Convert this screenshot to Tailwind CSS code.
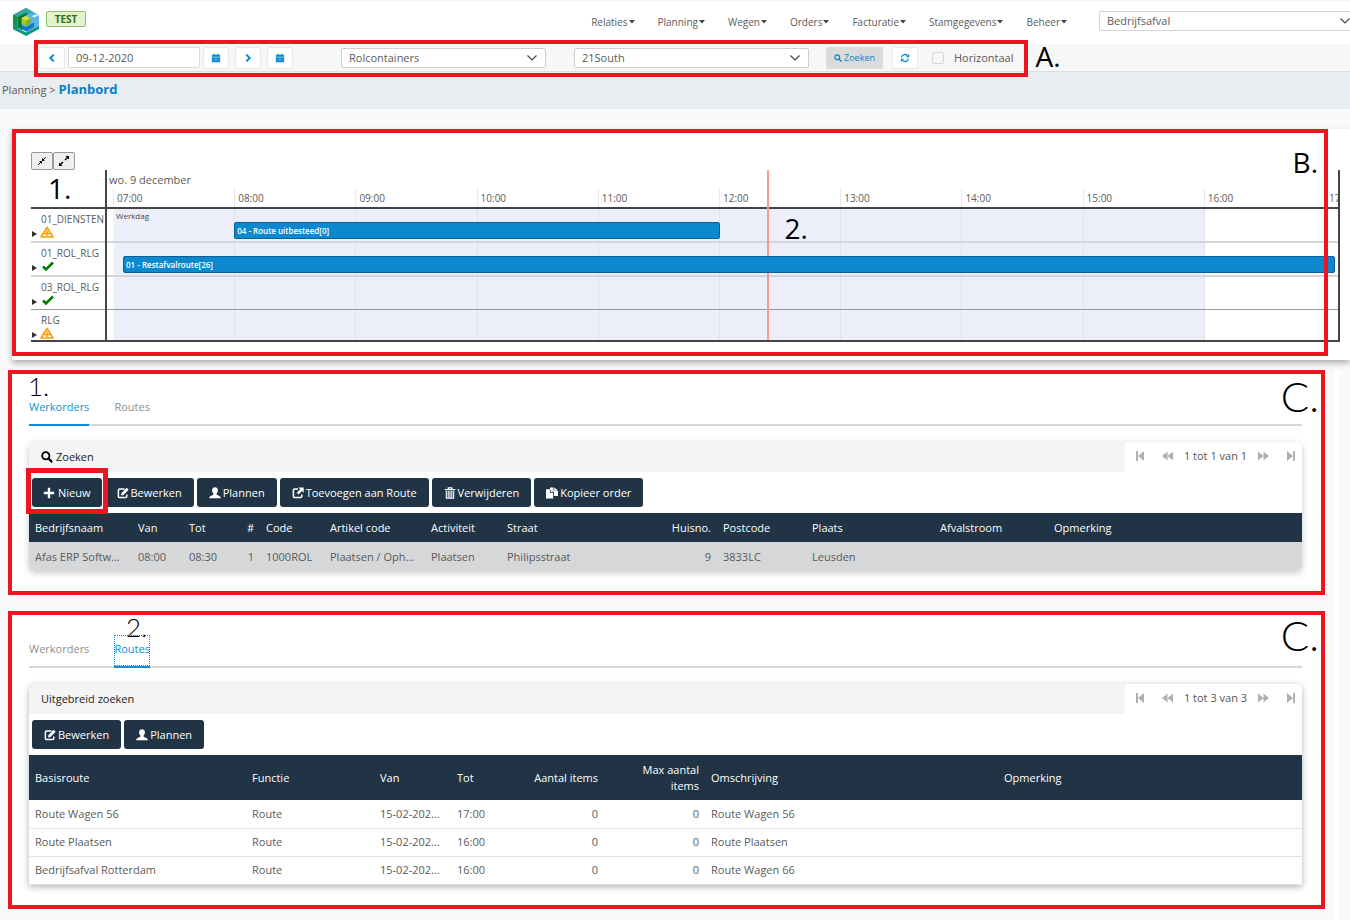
<!DOCTYPE html>
<html lang="nl">
<head>
<meta charset="utf-8">
<title>Planbord</title>
<script src="https://cdn.jsdelivr.net/npm/@tailwindcss/browser@4"></script>
</head>
<body class="min-h-screen bg-[#f8f9fb] font-['Open_Sans','Noto_Sans',sans-serif] text-[11px] leading-4 text-[#5a5a5a] overflow-x-hidden">

<svg class="hidden" aria-hidden="true">
  <symbol id="i-down" viewBox="0 0 12 12"><path d="M1.500 3.500 6 8l4.500-4.500" fill="none" stroke="currentColor" stroke-width="1.200"/></symbol>
  <symbol id="i-left" viewBox="0 0 12 12"><path d="M8 2 4 6l4 4" fill="none" stroke="currentColor" stroke-width="2.400"/></symbol>
  <symbol id="i-right" viewBox="0 0 12 12"><path d="m4 2 4 4-4 4" fill="none" stroke="currentColor" stroke-width="2.400"/></symbol>
  <symbol id="i-cal" viewBox="0 0 12 12"><path d="M1 2h2V1h1.500v1h3V1H9v1h2v2.500H1zM1 5.200h10V11H1z" fill="currentColor"/><path d="M3 7h6M3 9h6" stroke="#fff" stroke-width=".5" stroke-dasharray="1 .7"/></symbol>
  <symbol id="i-search" viewBox="0 0 12 12"><circle cx="4.800" cy="4.800" r="3.600" fill="none" stroke="currentColor" stroke-width="1.800"/><path d="m7.500 7.500 3.600 3.600" stroke="currentColor" stroke-width="2.200"/></symbol>
  <symbol id="i-refresh" viewBox="0 0 12 12"><path d="M1.800 5.400A4.200 4.200 0 0 1 9 3.200M10.200 6.600A4.200 4.200 0 0 1 3 8.800" fill="none" stroke="currentColor" stroke-width="1.600"/><path d="M11 1v4H7zM1 11V7h4z" fill="currentColor"/></symbol>
  <symbol id="i-plus" viewBox="0 0 12 12"><path d="M6 .8v10.400M.8 6h10.400" stroke="currentColor" stroke-width="2.400"/></symbol>
  <symbol id="i-edit" viewBox="0 0 12 12"><path d="M7.500 1.900H2.700a1.300 1.300 0 0 0-1.300 1.300v6.100a1.300 1.300 0 0 0 1.300 1.300h5.800a1.300 1.300 0 0 0 1.300-1.300V7.500" fill="none" stroke="currentColor" stroke-width="1.500"/><path d="M4 8.600 4.500 6 9.700.8l2 2L6.500 8z" fill="currentColor"/></symbol>
  <symbol id="i-share" viewBox="0 0 12 12"><path d="M6 1.900H2.700a1.300 1.300 0 0 0-1.300 1.300v6.100a1.300 1.300 0 0 0 1.300 1.300h5.800a1.300 1.300 0 0 0 1.300-1.300V7.500" fill="none" stroke="currentColor" stroke-width="1.500"/><path d="M6.500.5h5.200v5.200L10 4 6.500 7.500l-1.800-1.800L8.200 2.200z" fill="currentColor"/></symbol>
  <symbol id="i-user" viewBox="0 0 12 12"><path d="M6 .3c1.700 0 2.900 1.100 2.900 2.900 0 1.500-.6 2.600-1.300 3.300v1.300c1.600.6 4 1.400 4.300 3.400H.1c.3-2 2.700-2.800 4.300-3.400V6.500C3.700 5.800 3.100 4.700 3.100 3.200 3.100 1.400 4.300.3 6 .3z" fill="currentColor"/></symbol>
  <symbol id="i-trash" viewBox="0 0 12 12"><path d="M4.300 2V.8h3.400V2M.8 2.600h10.400" fill="none" stroke="currentColor" stroke-width="1.300"/><path d="M2.300 4v7.200h7.400V4M4.200 4v7M6 4v7M7.800 4v7" fill="none" stroke="currentColor" stroke-width="1.100"/></symbol>
  <symbol id="i-copy" viewBox="0 0 12 12"><path d="M4 .5h3.500v2.700H11L12 4v5H8V5L5.500 3H4zM8.300.5 11.500 3H8.300zM0 2.200h4v3.600h3.200v5.700H0zM4.800 2.500 7.200 5H4.800z" fill="currentColor"/></symbol>
  <symbol id="i-first" viewBox="0 0 12 12"><path d="M2 1h2v10H2zM10 1v10L4 6z" fill="currentColor"/></symbol>
  <symbol id="i-last" viewBox="0 0 12 12"><path d="M8 1h2v10H8zM2 1v10l6-5z" fill="currentColor"/></symbol>
  <symbol id="i-back" viewBox="0 0 12 12"><path d="M6 1v10L0 6zM12 1v10L6 6z" fill="currentColor"/></symbol>
  <symbol id="i-fwd" viewBox="0 0 12 12"><path d="M0 1v10l6-5zM6 1v10l6-5z" fill="currentColor"/></symbol>
  <symbol id="i-warn" viewBox="0 0 14 12"><path d="M7 1.300 13 11H1z" fill="none" stroke="#f90" stroke-width="1.600" stroke-linejoin="round"/><path d="M7 4v6M4 7.500h6" stroke="#f90" stroke-width="1.300"/></symbol>
  <symbol id="i-check" viewBox="0 0 12 12"><path d="m1 6.500 3 3 7-7" fill="none" stroke="#008000" stroke-width="2.600"/></symbol>
  <symbol id="i-in" viewBox="0 0 12 12"><path d="m1.500 10.500 9-9" stroke="currentColor" stroke-width="1.200"/><path d="M2.500 6H6v3.500zM6 2.500V6h3.500z" fill="currentColor"/></symbol>
  <symbol id="i-out" viewBox="0 0 12 12"><path d="m2 10 3-3M7 5l3-3" stroke="currentColor" stroke-width="1.400"/><path d="M1 7.500V11h3.500zM7.500 1H11v3.500z" fill="currentColor"/></symbol>
</svg>

<header class="flex h-11 items-start border-t border-[#f5f5f5] bg-white">
  <a href="#" aria-label="Home" class="ml-3 mt-1.5">
    <svg class="h-[30px] w-7" viewBox="0 0 28 30">
      <path d="M14 1 1 8v14l4.500 2.500V10L14 5.500z" fill="#12913f"/>
      <path d="M14 1v4.500l3.500 1.800L13 9.800v3L23 7.500 27 8z" fill="#4ab0e2"/>
      <path d="M14 1 1 8l4.500 2L14 5.500l3 1.500 4-2.200z" fill="#35a6a0"/>
      <path d="m27 8-5 2.500v6.200L14 21v5l13-7z" fill="#5bb5ea"/>
      <path d="M1 22l13 7 13-7v-3l-13 6.500L5.500 21v-3L1 17z" fill="#0b9a83"/>
      <path d="M5.500 10 14 5.500 17 7l-7 4v12l-4.500-2.500z" fill="#0a7a38"/>
      <path d="m17.500 7.300 4.500 3.200v6.200L14 21l-4-3V11z" fill="#5bb5ea"/>
      <path d="m10 18 4 2 8-4.500V20l-8 4.500-4-2z" fill="#1479c9"/>
      <path d="m14 9 4.500 2.300L14 13.700l-4.500-2.400z" fill="#e3e21c"/>
      <path d="M9.500 11.300 14 13.700V19l-4.500-2.500z" fill="#a8c81a"/>
      <path d="m18.500 11.300-4.500 2.400V19l4.500-2.500z" fill="#7fb51c"/>
    </svg>
  </a>
  <span class="ml-1.5 mt-2.5 flex h-4 w-10 items-center justify-center rounded-xs border border-[#8fc162] bg-[#e2f3cd] text-[10px] font-bold text-[#33700a]">TEST</span>
  <nav class="ml-auto mt-[13px] flex gap-[23px] text-[10px]">
    <a href="#" class="flex items-center gap-px">Relaties<svg class="h-1 w-1.5" viewBox="0 0 6 4"><path d="M0 0h6L3 3.500z" fill="#444"/></svg></a>
    <a href="#" class="flex items-center gap-px">Planning<svg class="h-1 w-1.5" viewBox="0 0 6 4"><path d="M0 0h6L3 3.500z" fill="#444"/></svg></a>
    <a href="#" class="flex items-center gap-px">Wegen<svg class="h-1 w-1.5" viewBox="0 0 6 4"><path d="M0 0h6L3 3.500z" fill="#444"/></svg></a>
    <a href="#" class="flex items-center gap-px">Orders<svg class="h-1 w-1.5" viewBox="0 0 6 4"><path d="M0 0h6L3 3.500z" fill="#444"/></svg></a>
    <a href="#" class="flex items-center gap-px">Facturatie<svg class="h-1 w-1.5" viewBox="0 0 6 4"><path d="M0 0h6L3 3.500z" fill="#444"/></svg></a>
    <a href="#" class="flex items-center gap-px">Stamgegevens<svg class="h-1 w-1.5" viewBox="0 0 6 4"><path d="M0 0h6L3 3.500z" fill="#444"/></svg></a>
    <a href="#" class="flex items-center gap-px">Beheer<svg class="h-1 w-1.5" viewBox="0 0 6 4"><path d="M0 0h6L3 3.500z" fill="#444"/></svg></a>
  </nav>
  <div class="relative ml-8 mt-2.5 w-[251px]">
    <select aria-label="Afdeling" class="block h-5 w-full appearance-none rounded-l-xs border border-r-0 border-[#d4d4d4] bg-white px-[7px]"><option>Bedrijfsafval</option></select>
    <svg class="pointer-events-none absolute -right-px top-1 size-3 text-[#444]"><use href="#i-down"/></svg>
  </div>
</header>

<div class="flex h-7 items-center border-b border-[#dcdfe0] bg-[#f7f7f7] pl-[34px]">
  <form class="relative flex h-full items-center pl-[5px] pr-[15px]" onsubmit="return false">
    <button type="button" aria-label="Vorige dag" class="flex h-[22px] w-[26px] items-center justify-center rounded-xs border border-[#e9e9e9] bg-white text-[#0b86d0]"><svg class="size-2.5"><use href="#i-left"/></svg></button>
    <input type="text" aria-label="Datum" value="09-12-2020" class="ml-[3px] h-[21px] w-[132px] rounded-xs border border-[#dadada] bg-white px-[7px]">
    <button type="button" aria-label="Kalender" class="ml-[3px] flex h-[22px] w-[26px] items-center justify-center rounded-xs border border-[#e9e9e9] bg-white text-[#0b86d0]"><svg class="size-2.5"><use href="#i-cal"/></svg></button>
    <button type="button" aria-label="Volgende dag" class="ml-1.5 flex h-[22px] w-[26px] items-center justify-center rounded-xs border border-[#e9e9e9] bg-white text-[#0b86d0]"><svg class="size-2.5"><use href="#i-right"/></svg></button>
    <button type="button" aria-label="Vandaag" class="ml-1.5 flex h-[22px] w-[26px] items-center justify-center rounded-xs border border-[#e9e9e9] bg-white text-[#0b86d0]"><svg class="size-2.5"><use href="#i-cal"/></svg></button>
    <div class="relative ml-12 w-[205px]">
      <select aria-label="Groep" class="block h-5 w-full appearance-none rounded-xs border border-[#cfcfcf] bg-white px-[7px]"><option>Rolcontainers</option></select>
      <svg class="pointer-events-none absolute right-2 top-1 size-3 text-[#444]"><use href="#i-down"/></svg>
    </div>
    <div class="relative ml-7 w-[235px]">
      <select aria-label="Locatie" class="block h-5 w-full appearance-none rounded-xs border border-[#cfcfcf] bg-white px-[7px]"><option>21South</option></select>
      <svg class="pointer-events-none absolute right-2 top-1 size-3 text-[#444]"><use href="#i-down"/></svg>
    </div>
    <button type="submit" class="ml-[17px] flex h-[22px] w-[57px] items-center justify-center gap-0.5 rounded-xs bg-[#dbdbdb] text-[9px] text-[#0b86d0]"><svg class="size-2"><use href="#i-search"/></svg>Zoeken</button>
    <button type="button" aria-label="Vernieuwen" class="ml-[9px] flex h-[22px] w-[26px] items-center justify-center rounded-xs border border-[#e9e9e9] bg-white text-[#0b86d0]"><svg class="size-2.5"><use href="#i-refresh"/></svg></button>
    <label class="ml-3.5 flex items-center gap-2.5"><input type="checkbox" class="size-3 appearance-none rounded-xs border border-[#d8d8d8] bg-[#f7f7f7]">Horizontaal</label>
    <div class="pointer-events-none absolute -bottom-1.5 -top-1 inset-x-0 border-4 border-[#ee1520]"></div>
  </form>
  <span class="ml-[7px] pb-1 text-[28px] leading-7 text-black">A.</span>
</div>

<div class="h-[37px] bg-[#e9edf0] pl-0.5 pt-[9px]">
  <a href="#">Planning</a> &gt; <a href="#" class="text-[13px] font-bold text-[#0b7fcb]">Planbord</a>
</div>

<main>
  <section class="relative ml-3 mt-5 bg-white pb-[18px] pl-[19px] pr-2.5 pt-[23px] shadow-[0_3px_6px_rgba(0,0,0,0.3)]">
    <div class="flex h-[18px]">
      <button aria-label="Inklappen" class="flex w-[22px] items-center justify-center rounded-xs border border-[#999] bg-[#efefef] text-black"><svg class="size-2.5"><use href="#i-in"/></svg></button>
      <button aria-label="Uitklappen" class="flex w-[22px] items-center justify-center rounded-xs border border-[#999] bg-[#efefef] text-black"><svg class="size-3"><use href="#i-out"/></svg></button>
    </div>
    <div class="flex border-b-2 border-[#444]">
      <div class="w-[74px] shrink-0 text-[10px]">
        <div class="h-[39px] border-b-2 border-[#444] pl-[17px] text-[28px] leading-9 text-black">1.</div>
        <div class="h-[34px] border-b-2 border-[#d6d6d6] pt-1">
          <div class="pl-2.5 leading-3 whitespace-nowrap">01_DIENSTEN</div>
          <div class="flex h-3.5 items-center gap-[3px] pl-px"><button aria-label="Open" class="pt-1"><svg class="h-1.5 w-[5px]" viewBox="0 0 5 6"><path d="M0 0v6l5-3z" fill="#333"/></svg></button><svg class="h-3 w-3.5"><use href="#i-warn"/></svg></div>
        </div>
        <div class="h-[34px] border-b-2 border-[#d6d6d6] pt-1">
          <div class="pl-2.5 leading-3">01_ROL_RLG</div>
          <div class="flex h-3.5 items-center gap-[5px] pl-px"><button aria-label="Open" class="pt-1"><svg class="h-1.5 w-[5px]" viewBox="0 0 5 6"><path d="M0 0v6l5-3z" fill="#333"/></svg></button><svg class="size-3"><use href="#i-check"/></svg></div>
        </div>
        <div class="h-[33px] border-b border-[#999] pt-1">
          <div class="pl-2.5 leading-3">03_ROL_RLG</div>
          <div class="flex h-3.5 items-center gap-[5px] pl-px"><button aria-label="Open" class="pt-1"><svg class="h-1.5 w-[5px]" viewBox="0 0 5 6"><path d="M0 0v6l5-3z" fill="#333"/></svg></button><svg class="size-3"><use href="#i-check"/></svg></div>
        </div>
        <div class="h-[30px] pt-1">
          <div class="pl-2.5 leading-3">RLG</div>
          <div class="flex h-3.5 items-center gap-[3px] pl-px"><button aria-label="Open" class="pt-1"><svg class="h-1.5 w-[5px]" viewBox="0 0 5 6"><path d="M0 0v6l5-3z" fill="#333"/></svg></button><svg class="h-3 w-3.5"><use href="#i-warn"/></svg></div>
        </div>
      </div>
      <div class="relative min-w-0 flex-1 overflow-hidden border-l-2 border-r-2 border-[#444]">
        <div class="flex h-[39px] flex-col justify-between border-b-2 border-[#444]">
          <div class="pl-0.5 pt-0.5">wo. 9 december</div>
          <div class="grid grid-cols-[6px_repeat(10,minmax(0,1fr))_13px] text-[10px] leading-[18px]">
            <span></span>
            <span class="border-l border-[#e8e8e8] pl-[3px]">07:00</span>
            <span class="border-l border-[#e8e8e8] pl-[3px]">08:00</span>
            <span class="border-l border-[#e8e8e8] pl-[3px]">09:00</span>
            <span class="border-l border-[#e8e8e8] pl-[3px]">10:00</span>
            <span class="border-l border-[#e8e8e8] pl-[3px]">11:00</span>
            <span class="border-l border-[#e8e8e8] pl-[3px]">12:00</span>
            <span class="border-l border-[#e8e8e8] pl-[3px]">13:00</span>
            <span class="border-l border-[#e8e8e8] pl-[3px]">14:00</span>
            <span class="border-l border-[#e8e8e8] pl-[3px]">15:00</span>
            <span class="border-l border-[#e8e8e8] pl-[3px]">16:00</span>
            <span class="border-l border-[#e8e8e8] pl-[3px]">17:00</span>
          </div>
        </div>
        <div class="relative">
          <!-- working hours shading -->
          <div class="absolute inset-0 grid grid-cols-[6px_repeat(10,minmax(0,1fr))_13px]">
            <span></span>
            <span class="border-l-2 border-[#f4f4f8] bg-[#eceffa]"></span>
            <span class="border-l border-[#dfe2ee] bg-[#eceffa]"></span>
            <span class="border-l border-[#dfe2ee] bg-[#eceffa]"></span>
            <span class="border-l border-[#dfe2ee] bg-[#eceffa]"></span>
            <span class="border-l border-[#dfe2ee] bg-[#eceffa]"></span>
            <span class="border-l border-[#dfe2ee] bg-[#eceffa]"></span>
            <span class="border-l border-[#dfe2ee] bg-[#eceffa]"></span>
            <span class="border-l border-[#dfe2ee] bg-[#eceffa]"></span>
            <span class="border-l border-[#dfe2ee] bg-[#eceffa]"></span>
            <span class="border-l border-[#dfe2ee]"></span>
            <span></span>
          </div>
          <div class="relative h-[34px] border-b-2 border-[#d3d5d9] pl-[9px] text-[8px] leading-[14px] text-[#444]">Werkdag</div>
          <div class="relative h-[34px] border-b-2 border-[#d3d5d9]"></div>
          <div class="relative h-[33px] border-b border-[#999]"></div>
          <div class="relative h-[30px]"></div>
        </div>
        <!-- current time and planned routes, placed by time of day -->
        <div class="absolute inset-y-0 left-1.5 right-[13px]">
          <div class="absolute inset-y-0 w-0.5 bg-[#f79a90]" style="left:54%"></div>
          <div class="absolute top-[52px] h-[17px] truncate rounded-xs border border-[#0a5f96] bg-[#0c88cf] pl-0.5 text-[8px] font-semibold leading-4 text-white" style="left:10%;width:40.100%">04 - Route uitbesteed[0]</div>
          <div class="absolute top-[86px] h-[17px] truncate rounded-xs border border-[#0a5f96] bg-[#0c88cf] pl-0.5 text-[8px] font-semibold leading-4 text-white" style="left:.83%;width:100%">01 - Restafvalroute[26]</div>
          <span class="absolute top-11 text-[28px] leading-7 text-black" style="left:55.400%">2.</span>
        </div>
      </div>
    </div>
    <div class="pointer-events-none absolute bottom-1 left-0 right-[22px] top-0 border-4 border-[#ee1520]"></div>
    <span class="absolute right-8 top-[19px] text-[28px] leading-7 text-black">B.</span>
  </section>

  <div class="flex pl-2 pt-2.5">
    <div class="flex min-w-0 flex-1 flex-col gap-4 pb-3">
      <section class="relative border-4 border-[#ee1520] bg-white pb-5 pl-[17px] pr-[19px] pt-[25px]">
        <span class="absolute left-4 top-0 font-[Lato] text-[26px] font-light leading-6 text-black">1.</span>
        <span class="absolute right-0.5 top-0.5 font-[Lato] text-[42px] font-light leading-10 text-black">C.</span>
        <div role="tablist" class="flex gap-[25px] border-b-2 border-[#d8d8d8] text-[#8e8e8e]">
          <button role="tab" aria-selected="true" class="-mb-0.5 h-[27px] border-b-2 border-[#0b8fdc] pb-[9px] text-[#0b8fdc]">Werkorders</button>
          <button role="tab" aria-selected="false" class="-mb-0.5 h-[27px] border-b-2 border-transparent pb-[9px]">Routes</button>
        </div>
        <div class="mt-4 overflow-hidden rounded-md shadow-[0_2px_7px_rgba(0,0,0,0.22)]">
          <div class="flex h-[30px]">
            <button class="flex flex-1 items-center gap-[3px] bg-[#f4f4f4] pl-3 text-[#222]"><svg class="size-3 text-black"><use href="#i-search"/></svg>Zoeken</button>
            <div class="flex w-[177px] items-center justify-between pb-0.5 pl-[9px] pr-[5px] text-[#555]">
              <button aria-label="Eerste" class="text-[#b0b0b0]"><svg class="size-3"><use href="#i-first"/></svg></button>
              <button aria-label="Vorige" class="ml-1.5 text-[#b0b0b0]"><svg class="h-3 w-[11px]"><use href="#i-back"/></svg></button>
              <span>1 tot 1 van 1</span>
              <button aria-label="Volgende" class="mr-1.5 text-[#b0b0b0]"><svg class="h-3 w-[11px]"><use href="#i-fwd"/></svg></button>
              <button aria-label="Laatste" class="text-[#b0b0b0]"><svg class="size-3"><use href="#i-last"/></svg></button>
            </div>
          </div>
          <div class="flex gap-[3px] px-[3px] py-1.5 text-white">
            <button class="flex h-[29px] items-center gap-[3px] rounded-[3px] bg-[#203445] px-[11px]"><svg class="size-3"><use href="#i-plus"/></svg>Nieuw</button>
            <button class="flex h-[29px] items-center gap-0.5 rounded-[3px] bg-[#203445] px-3"><svg class="size-3"><use href="#i-edit"/></svg>Bewerken</button>
            <button class="flex h-[29px] items-center gap-0.5 rounded-[3px] bg-[#203445] px-3"><svg class="size-3"><use href="#i-user"/></svg>Plannen</button>
            <button class="flex h-[29px] items-center gap-0.5 rounded-[3px] bg-[#203445] px-3"><svg class="size-3"><use href="#i-share"/></svg>Toevoegen aan Route</button>
            <button class="flex h-[29px] items-center gap-0.5 rounded-[3px] bg-[#203445] px-3"><svg class="size-3"><use href="#i-trash"/></svg>Verwijderen</button>
            <button class="flex h-[29px] items-center gap-0.5 rounded-[3px] bg-[#203445] px-3"><svg class="size-3"><use href="#i-copy"/></svg>Kopieer order</button>
          </div>
          <table class="w-full table-fixed text-left">
            <colgroup><col class="w-[103px]"><col class="w-[51px]"><col class="w-[51px]"><col class="w-[26px]"><col class="w-16"><col class="w-[101px]"><col class="w-[76px]"><col class="w-[159px]"><col class="w-[57px]"><col class="w-[89px]"><col class="w-32"><col class="w-[114px]"><col class="w-[254px]"></colgroup>
            <thead><tr class="h-[29px] bg-[#203445] text-white *:px-1.5 *:font-normal *:whitespace-nowrap">
              <th>Bedrijfsnaam</th><th>Van</th><th>Tot</th><th class="text-right">#</th><th>Code</th><th>Artikel code</th><th>Activiteit</th><th>Straat</th><th class="text-right">Huisno.</th><th>Postcode</th><th>Plaats</th><th>Afvalstroom</th><th>Opmerking</th>
            </tr></thead>
            <tbody><tr class="h-[29px] bg-[#d5d7d9] *:px-1.5 *:whitespace-nowrap">
              <td>Afas ERP Softw...</td><td>08:00</td><td>08:30</td><td class="text-right">1</td><td>1000ROL</td><td>Plaatsen / Oph...</td><td>Plaatsen</td><td>Philipsstraat</td><td class="text-right">9</td><td>3833LC</td><td>Leusden</td><td></td><td></td>
            </tr></tbody>
          </table>
        </div>
        <div class="pointer-events-none absolute left-3.5 top-[94px] h-[46px] w-[82px] border-5 border-[#ee1520]"></div>
      </section>

      <section class="relative border-4 border-[#ee1520] bg-white pb-5 pl-[17px] pr-[19px] pt-[26px]">
        <span class="absolute left-[114px] top-0 font-[Lato] text-[26px] font-light leading-6 text-black">2.</span>
        <span class="absolute right-0.5 top-0 font-[Lato] text-[42px] font-light leading-10 text-black">C.</span>
        <div role="tablist" class="flex gap-[25px] border-b-2 border-[#d8d8d8] text-[#8e8e8e]">
          <button role="tab" aria-selected="false" class="-mb-0.5 h-[27px] border-b-2 border-transparent pb-[9px]">Werkorders</button>
          <button role="tab" aria-selected="true" class="relative -mb-0.5 h-[27px] border-b-2 border-[#0b8fdc] pb-[9px] text-[#0b8fdc]">Routes<span class="absolute inset-x-0 -top-1.5 bottom-0 border border-dotted border-[#0b8fdc]"></span></button>
        </div>
        <div class="mt-4 overflow-hidden rounded-t-md shadow-[0_2px_7px_rgba(0,0,0,0.3)]">
          <div class="flex h-[30px]">
            <button class="flex flex-1 items-center bg-[#f4f4f4] pl-3 text-[#222]">Uitgebreid zoeken</button>
            <div class="flex w-[177px] items-center justify-between pb-0.5 pl-[9px] pr-[5px] text-[#555]">
              <button aria-label="Eerste" class="text-[#b0b0b0]"><svg class="size-3"><use href="#i-first"/></svg></button>
              <button aria-label="Vorige" class="ml-1.5 text-[#b0b0b0]"><svg class="h-3 w-[11px]"><use href="#i-back"/></svg></button>
              <span>1 tot 3 van 3</span>
              <button aria-label="Volgende" class="mr-1.5 text-[#b0b0b0]"><svg class="h-3 w-[11px]"><use href="#i-fwd"/></svg></button>
              <button aria-label="Laatste" class="text-[#b0b0b0]"><svg class="size-3"><use href="#i-last"/></svg></button>
            </div>
          </div>
          <div class="flex gap-[3px] px-[3px] py-1.5 text-white">
            <button class="flex h-[29px] items-center gap-0.5 rounded-[3px] bg-[#203445] px-3"><svg class="size-3"><use href="#i-edit"/></svg>Bewerken</button>
            <button class="flex h-[29px] items-center gap-0.5 rounded-[3px] bg-[#203445] px-3"><svg class="size-3"><use href="#i-user"/></svg>Plannen</button>
          </div>
          <table class="w-full table-fixed text-left">
            <colgroup><col class="w-[217px]"><col class="w-32"><col class="w-[77px]"><col class="w-[75px]"><col class="w-[78px]"><col class="w-[101px]"><col class="w-[293px]"><col class="w-[304px]"></colgroup>
            <thead><tr class="h-[45px] bg-[#203445] text-white *:px-1.5 *:font-normal *:whitespace-nowrap">
              <th>Basisroute</th><th>Functie</th><th>Van</th><th>Tot</th><th class="text-right">Aantal items</th><th class="text-right">Max aantal<br>items</th><th>Omschrijving</th><th>Opmerking</th>
            </tr></thead>
            <tbody class="*:h-7 *:border-b *:border-[#e3e3e3]">
              <tr class="*:px-1.5"><td>Route Wagen 56</td><td>Route</td><td>15-02-202...</td><td>17:00</td><td class="text-right">0</td><td class="text-right">0</td><td>Route Wagen 56</td><td></td></tr>
              <tr class="*:px-1.5"><td>Route Plaatsen</td><td>Route</td><td>15-02-202...</td><td>16:00</td><td class="text-right">0</td><td class="text-right">0</td><td>Route Plaatsen</td><td></td></tr>
              <tr class="*:px-1.5"><td>Bedrijfsafval Rotterdam</td><td>Route</td><td>15-02-202...</td><td>16:00</td><td class="text-right">0</td><td class="text-right">0</td><td>Route Wagen 66</td><td></td></tr>
            </tbody>
          </table>
        </div>
      </section>
    </div>
    <div class="flex w-[25px] shrink-0 justify-end"><div class="mr-[11px] w-[5px] bg-white"></div></div>
  </div>
</main>
</body>
</html>
